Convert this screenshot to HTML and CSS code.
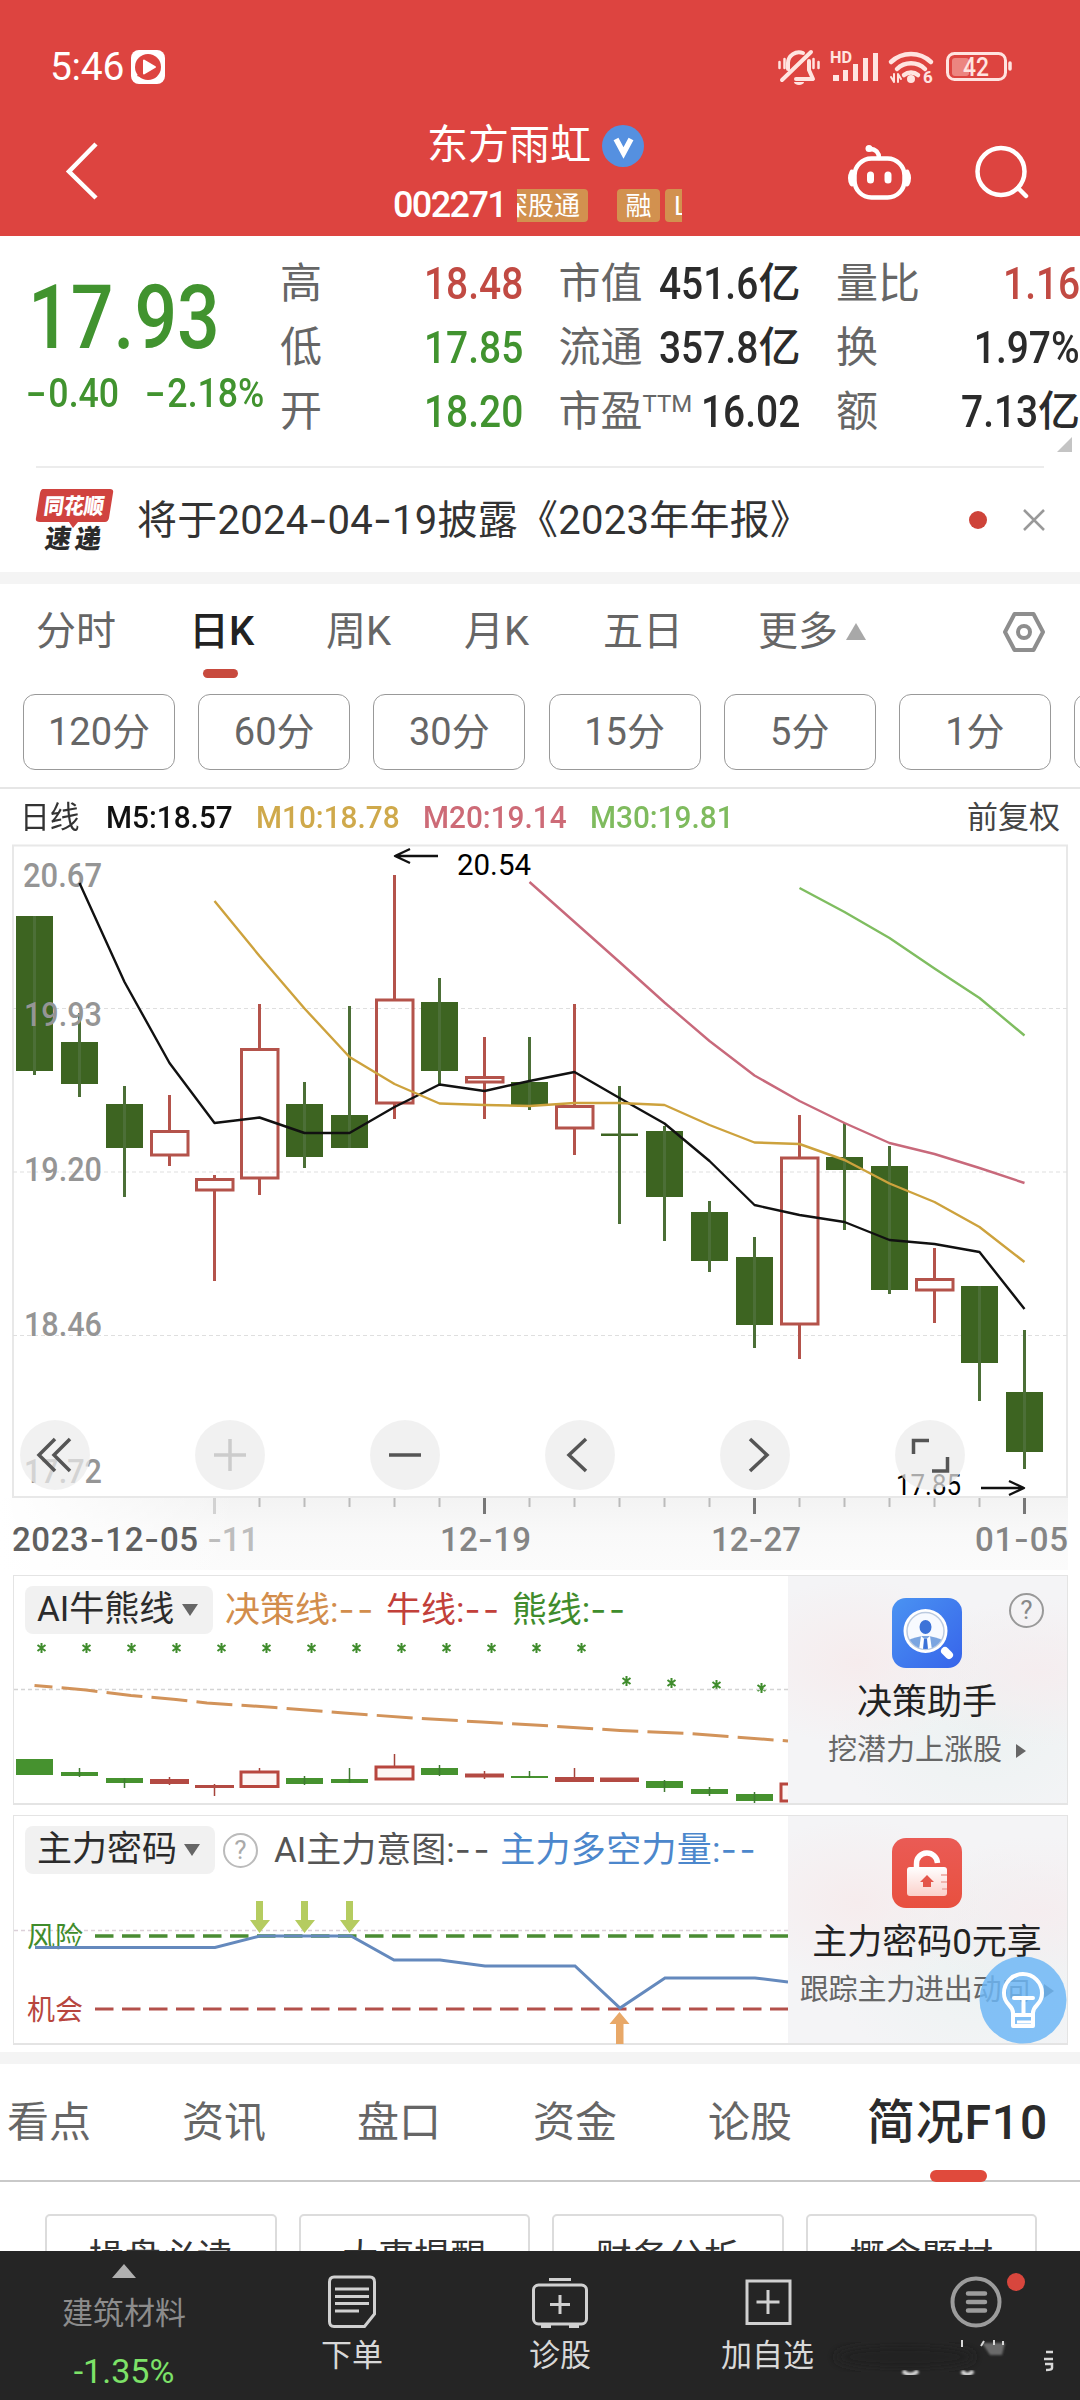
FILE: index.html
```html
<!DOCTYPE html>
<html lang="zh-CN">
<head>
<meta charset="utf-8">
<title>东方雨虹 002271</title>
<link rel="stylesheet" href="styles.css">
</head>
<body>
<header class="top">
  <div class="status">
    <div class="clock"><span>5:46</span>
      <svg width="34" height="34" viewBox="0 0 34 34"><rect width="34" height="34" rx="8" fill="#fff"/><circle cx="17" cy="17" r="13" fill="#dd4440"/><path d="M6 26 9 21 13 28Z" fill="#dd4440"/><path d="M13 10.5v13L24 17Z" fill="#fff" stroke="#fff" stroke-width="2" stroke-linejoin="round"/></svg>
    </div>
    <svg class="sysicons" width="240" height="40" viewBox="775 47 240 40" fill="none" stroke="#ffe4e0" stroke-width="4" stroke-linecap="round" stroke-linejoin="round">
      <path d="M788 69v-6a11 11 0 0 1 15-10M809 61v9l4 9h-17M782 80l29-28"/><path d="M794 82a5 3 0 0 0 10 0Z" fill="#ffe4e0" stroke="none"/>
      <path d="M779.500 62v6M784.500 59v9M813.500 59v9M818.500 62v6" stroke-width="2.500"/>
      <text x="830" y="63" class="svg-sm" textLength="22" lengthAdjust="spacingAndGlyphs">HD</text>
      <path d="M833 75h6v6h-6zM843 70h5v11h-5zM853 64h5v17h-5zM863 58h5v23h-5zM873 53h5v28h-5z" fill="#ffe4e0" stroke="none"/>
      <path d="M891 62a29 29 0 0 1 40 0M897 69a20 20 0 0 1 28 0M904 75a11 11 0 0 1 14 0" stroke-width="4.500"/>
      <circle cx="911" cy="79" r="4" fill="#ffe4e0" stroke="none"/><path d="M891 77l3 5v-8M898 82v-8l3 5" stroke-width="2"/>
      <text x="923" y="83" class="svg-6">6</text>
      <rect x="947.500" y="53.500" width="58" height="26" rx="7" stroke-width="3"/><rect x="952" y="58" width="17" height="18" rx="3" fill="#ec8580" stroke="none"/>
      <path d="M1010 63v6" stroke-width="3.500"/><text x="963" y="75.500" class="svg-42" textLength="26" lengthAdjust="spacingAndGlyphs">42</text>
    </svg>
  </div>
  <nav class="nav">
    <svg class="back" width="36" height="60" viewBox="64 141 36 60"><path d="M96 144 69 171.500 96 198" fill="none" stroke="#fff" stroke-width="4.500"/></svg>
    <div class="title">
      <div class="name">东方雨虹<svg width="42" height="42" viewBox="0 0 42 42"><circle cx="21" cy="21" r="21" fill="#5590e0"/><path d="m14 14 7.500 14 7.500-14" fill="none" stroke="#fff" stroke-width="5.500"/></svg></div>
      <div class="code"><span class="num">002271</span><span class="tag cut">深股通</span><span class="tag rong">融</span><span class="tag ell">L</span></div>
    </div>
    <svg class="navicons" width="190" height="64" viewBox="845 141 190 64" fill="none" stroke="#fff" stroke-width="4.500" stroke-linecap="round">
      <rect x="854.500" y="158.500" width="50" height="39" rx="17"/><circle cx="869" cy="148.500" r="3.500" fill="#fff" stroke="none"/><path d="M870 149c6 0 9 4 9 9"/><path d="M852 172q-3 6 0 12M907 172q3 6 0 12" stroke-width="5"/><path d="M870.500 175v5M888 175v5" stroke-width="7"/>
      <circle cx="1001" cy="171.500" r="23.500"/><path d="m1018 188 8 8"/>
    </svg>
  </nav>
</header>

<section class="quote">
  <div class="price">
    <div class="last"><span>17.93</span></div>
    <div class="chg"><span><i>-</i>0.40</span><span><i>-</i>2.18%</span></div>
  </div>
  <div class="stats">
    <div><label>高</label><b class="red"><s>18.48</s></b></div><div><label>市值</label><b><s>451.6</s>亿</b></div><div><label>量比</label><b class="red"><s>1.16</s></b></div>
    <div><label>低</label><b class="green"><s>17.85</s></b></div><div><label>流通</label><b><s>357.8</s>亿</b></div><div><label>换</label><b><s>1.97%</s></b></div>
    <div><label>开</label><b class="green"><s>18.20</s></b></div><div><label>市盈<sup>TTM</sup></label><b><s>16.02</s></b></div><div><label>额</label><b><s>7.13</s>亿</b></div>
  </div>
  <i class="corner"></i>
</section>

<section class="news">
  <svg width="80" height="66" viewBox="34 486 80 66">
    <path d="M43 488h67q4 0 3 4l-4 25q-1 4-4 4h-27l-5 6-4-6h-29q-5 0-4-4l4-25q1-4 3-4Z" fill="#d0433f"/>
    <text transform="translate(43 513) skewX(-8)" class="logo-a" textLength="60" lengthAdjust="spacingAndGlyphs">同花顺</text>
    <text transform="translate(44 547) skewX(-8)" class="logo-b" textLength="56">速递</text>
  </svg>
  <p>将于2024<i>-</i>04<i>-</i>19披露《2023年年报》</p>
  <em></em>
  <svg width="24" height="22" viewBox="0 0 24 22"><path d="m2 1 20 20M22 1 2 21" stroke="#999" stroke-width="2.500"/></svg>
</section>
<div class="gap"></div>

<section class="period">
  <div class="tabs"><span>分时</span><span class="on">日K</span><span>周K</span><span>月K</span><span>五日</span><span>更多<i></i></span>
    <svg width="44" height="42" viewBox="0 0 44 42" fill="none" stroke="#8e8e8e" stroke-width="4" stroke-linejoin="round"><path d="M12.500 3h19L41 21l-9.500 18h-19L3 21Z"/><circle cx="22" cy="21" r="6"/></svg>
  </div>
  <div class="pills"><span>120分</span><span>60分</span><span>30分</span><span>15分</span><span>5分</span><span>1分</span><span></span></div>
</section>

<section class="ma"><span class="k">日线</span><span class="m5">M5:18.57</span><span class="m10">M10:18.78</span><span class="m20">M20:19.14</span><span class="m30">M30:19.81</span><span class="fq">前复权</span></section>

<section class="chart">
<svg width="1080" height="734" viewBox="0 840 1080 734">
  <defs><linearGradient id="ax" x1="0" x2="0" y1="0" y2="1"><stop offset="0" stop-color="#f3f3f3"/><stop offset=".5" stop-color="#f9f9f9"/><stop offset="1" stop-color="#fbfbfb"/></linearGradient>
  <linearGradient id="fade" x1="0" x2="1" y1="0" y2="0"><stop offset="0" stop-color="#fff"/><stop offset="1" stop-color="#fff" stop-opacity="0"/></linearGradient></defs>
  <rect x="0" y="1498" width="1068" height="72" fill="url(#ax)"/><rect x="0" y="1498" width="240" height="72" fill="url(#fade)"/>
  <rect x="13" y="845.500" width="1054" height="651.500" fill="none" stroke="#e8e8e8" stroke-width="2"/>
  <path d="M13 1008.500H1067M13 1172H1067M13 1335.500H1067" stroke="#dfdfdf" stroke-width="1.200" stroke-dasharray="4 3"/>
  <g fill="#3d6421"><path d="M16 916h37v155h-37zM61 1042h37v42h-37zM106 1104h37v44h-37zM286 1104h37v53h-37zM331 1115h37v33h-37zM421 1002h37v69h-37zM511 1082h37v23h-37zM601 1133.500h37v2.500h-37zM646 1131h37v66h-37zM691 1212h37v49h-37zM736 1257h37v68h-37zM826 1157h37v13h-37zM871 1166h37v124h-37zM961 1286h37v77h-37zM1006 1392h37v60h-37z"/></g>
  <path d="M34.500 916V1075M79.500 1013V1097M124.500 1086V1197M304.500 1082V1168M349.500 1006V1148M439.500 978V1084M529.500 1037V1110M619.500 1086V1224M664.500 1126V1241M709.500 1201V1272M754.500 1237V1348M844.500 1123V1230M889.500 1146V1294M979.500 1286V1401M1024.500 1330V1469" stroke="#4c6f37" stroke-width="3"/>
  <g fill="none" stroke="#b4534b" stroke-width="3"><path d="M169.500 1095v36M169.500 1155v11M214.500 1175v4M214.500 1190v91M259.500 1004v45M259.500 1179v16M394.500 875v125M394.500 1104v15M484.500 1037v40M484.500 1082v37M574.500 1004v102M574.500 1128v27M799.500 1115v42M799.500 1325v34M934.500 1248v31M934.500 1290v33"/>
  <path d="M151.500 1131.500h36.500v23.500h-36.500zM196.500 1179.500h36.500v10.500h-36.500zM241.500 1049.500h36.500v128.500h-36.500zM376.500 1000h36.500v103h-36.500zM466.500 1077.500h36.500v4.500h-36.500zM556.500 1106.500h36.500v21.500h-36.500zM781.500 1158h36.500v166h-36.500zM916.500 1279.500h36.500v10.500h-36.500z"/></g>
  <g class="ylab"><text x="23" y="886.500" textLength="79" lengthAdjust="spacingAndGlyphs">20.67</text><text x="24" y="1025.500" textLength="78" lengthAdjust="spacingAndGlyphs">19.93</text><text x="24" y="1181" textLength="78" lengthAdjust="spacingAndGlyphs">19.20</text><text x="24" y="1335.500" textLength="78" lengthAdjust="spacingAndGlyphs">18.46</text><text x="24" y="1482.500" textLength="78" lengthAdjust="spacingAndGlyphs">17.72</text></g>
  <g fill="none" stroke-width="2.400" stroke-linejoin="round">
    <path stroke="#111" d="M79.500 883 124.500 982 169.500 1063 214.500 1123 259.500 1117.500 304.500 1133 349.500 1133 394.500 1107 439.500 1084.500 484.500 1091 529.500 1081 574.500 1072 619.500 1098 664.500 1123.500 709.500 1161 754.500 1205 799.500 1215 844.500 1222 889.500 1240 934.500 1244 979.500 1252 1024.500 1309"/>
    <path stroke="#cda23d" d="M214.500 901 259.500 956 304.500 1008.500 349.500 1057 394.500 1084 439.500 1103.500 484.500 1105 529.500 1106 574.500 1103 619.500 1103 664.500 1105 709.500 1125 754.500 1142.500 799.500 1144 844.500 1160 889.500 1183.500 934.500 1202 979.500 1227 1024.500 1262"/>
    <path stroke="#c8697b" d="M529.500 882 574.500 922 619.500 962 664.500 1002.500 709.500 1041 754.500 1075.500 799.500 1101 844.500 1123 889.500 1143 934.500 1154 979.500 1168 1024.500 1183"/>
    <path stroke="#7fbd60" d="M799.500 888 844.500 912 889.500 938 934.500 968.500 979.500 998 1024.500 1035.500"/>
    <path stroke="#111" d="M438 856H395M410 849l-15 7 15 7M981 1488h43M1009 1481l15 7-15 7"/>
  </g>
  <text class="mark" x="457" y="875" textLength="74" lengthAdjust="spacingAndGlyphs">20.54</text><text class="mark" x="896" y="1494.500" textLength="65" lengthAdjust="spacingAndGlyphs">17.85</text>
  <path d="M259.500 1498v9M304.500 1498v9M349.500 1498v9M394.500 1498v9M439.500 1498v9M529.500 1498v9M574.500 1498v9M619.500 1498v9M664.500 1498v9M709.500 1498v9M799.500 1498v9M844.500 1498v9M889.500 1498v9M934.500 1498v9M979.500 1498v9" stroke="#bbb" stroke-width="2"/>
  <path d="M214.500 1498v16" stroke="#d2d2d2" stroke-width="3"/><path d="M484.500 1498v16M754.500 1498v16M1024.500 1498v16" stroke="#777" stroke-width="3"/>
  <g class="xlab"><text x="12" y="1551" textLength="186" fill="#606060">2023<tspan>-</tspan>12<tspan>-</tspan>05</text><text x="207" y="1551" textLength="52" fill="#bdbdbd"><tspan>-</tspan>11</text><text x="440" y="1551" textLength="91">12<tspan>-</tspan>19</text><text x="711" y="1551" textLength="90">12<tspan>-</tspan>27</text><text x="975" y="1551" textLength="93">01<tspan>-</tspan>05</text></g>
</svg>
<div class="tools">
  <span><svg viewBox="0 0 70 70"><path d="M35 19 19 35l16 16M50 19 34 35l16 16"/></svg></span>
  <span class="off"><svg viewBox="0 0 70 70"><path d="M19 35h32M35 19v32"/></svg></span>
  <span><svg viewBox="0 0 70 70"><path d="M19 35h32"/></svg></span>
  <span><svg viewBox="0 0 70 70"><path d="M41 19 24 35l17 16"/></svg></span>
  <span><svg viewBox="0 0 70 70"><path d="m30 19 17 16-17 16"/></svg></span>
  <span><svg viewBox="0 0 70 70"><path d="M18.500 34V20.500H34M37 51h15.500V37"/></svg></span>
</div>
</section>

<section class="panel">
  <div class="main">
    <div class="head"><span class="chip">AI牛熊线<i></i></span><span class="or">决策线:<i>--</i></span><span class="rd">牛线:<i>--</i></span><span class="gn">熊线:<i>--</i></span></div>
    <svg width="774" height="164" viewBox="14 1640 774 164">
      <defs><path id="st" d="M0-5V5M-4-3 4 3M-4 3 4-3" stroke="#3f8c2c" stroke-width="2"/></defs>
      <use href="#st" x="41.500" y="1648"/><use href="#st" x="86.500" y="1648"/><use href="#st" x="131.500" y="1648"/><use href="#st" x="176.500" y="1648"/><use href="#st" x="221.500" y="1648"/><use href="#st" x="266.500" y="1648"/><use href="#st" x="311.500" y="1648"/><use href="#st" x="356.500" y="1648"/><use href="#st" x="401.500" y="1648"/><use href="#st" x="446.500" y="1648"/><use href="#st" x="491.500" y="1648"/><use href="#st" x="536.500" y="1648"/><use href="#st" x="581.500" y="1648"/><use href="#st" x="626.500" y="1681"/><use href="#st" x="671.500" y="1683"/><use href="#st" x="716.500" y="1685"/><use href="#st" x="761.500" y="1688"/>
      <path d="M14 1689.500H788" stroke="#d4d4d4" stroke-width="1.500" stroke-dasharray="4 3"/>
      <path d="M34.500 1685.500 86 1690 131 1695.500 176 1699.500 207 1703 275 1707.500 344 1713 413 1718 482 1722 551 1726 620 1730.500 689 1733.500 788 1741" fill="none" stroke="#d2935a" stroke-width="3" stroke-dasharray="36 9.200" stroke-dashoffset="18"/>
      <path fill="#46922f" d="M16 1759h37v16h-37zM61 1772h37v4h-37zM106 1778h37v5h-37zM286 1778h37v6h-37zM331 1779h37v4h-37zM421 1768h37v7h-37zM511 1776h37v2h-37zM646 1781h37v7h-37zM691 1789h37v5h-37zM736 1794h37v7h-37z"/>
      <path stroke="#3f7a31" stroke-width="1.500" d="M79.500 1768v9M124.500 1778v10M304.500 1776v9M349.500 1768v15M439.500 1765v11M529.500 1771v7M664.500 1780v12M709.500 1787v9M754.500 1792v11"/>
      <path stroke="#a5433b" stroke-width="1.500" d="M169.500 1777v8M214.500 1784v12M259.500 1768v3M394.500 1754v12M484.500 1771v8M574.500 1768v14"/>
      <path fill="#b34a43" d="M150 1779h39v5h-39zM195 1785h39v3h-39zM465 1773.500h39v4h-39zM555 1777h39v5h-39zM600 1777.500h39v4.500h-39z"/>
      <path fill="#fdf6f5" stroke="#b8463e" stroke-width="3" d="M241 1772h37v14.500h-37zM376 1767h37v12h-37zM781 1784h37v17h-37z"/>
    </svg>
  </div>
  <aside>
    <svg class="ic" width="70" height="70" viewBox="0 0 70 70"><defs><linearGradient id="bl" x1="0" y1="0" x2="1" y2="1"><stop offset="0" stop-color="#4a93f2"/><stop offset="1" stop-color="#3764ea"/></linearGradient><clipPath id="lens"><circle cx="33.500" cy="33" r="18"/></clipPath></defs><rect width="70" height="70" rx="14" fill="url(#bl)"/><circle cx="33.500" cy="33" r="22" fill="#fff"/><circle cx="33.500" cy="33" r="18.500" fill="#f7faff" stroke="#bccbe0" stroke-width="1.500"/><g clip-path="url(#lens)"><path d="M14 52V44q2-3 16-6h7q14 3 16 6v8Z" fill="#7ba5e0"/><path d="m29 38 4.500 4 4.500-4 2 14H27Z" fill="#fff"/><path d="m32 41-1 10h5l-1-10Z" fill="#3d73d8"/></g><ellipse cx="33.500" cy="29" rx="6" ry="7" fill="#3d73d8"/><path d="m53 53 4 4" stroke="#fff" stroke-width="8" stroke-linecap="round"/></svg>
    <span class="q side">?</span>
    <h3>决策助手</h3><p>挖潜力上涨股<i></i></p>
  </aside>
</section>

<section class="panel">
  <div class="main">
    <div class="head two"><span class="chip">主力密码<i></i></span><span class="q">?</span><span class="gy">AI主力意图:<i>--</i></span><span class="bu">主力多空力量:<i>--</i></span></div>
    <svg width="774" height="164" viewBox="14 1880 774 164">
      <path d="M14 1930.500H788" stroke="#dbd0d8" stroke-width="1.500" stroke-dasharray="4 3"/>
      <text x="27" y="1947" class="risk" fill="#3f8c2c">风险</text><text x="27" y="2020" class="risk" fill="#b8463e">机会</text>
      <path d="M95 1936H788" stroke="#4a8c33" stroke-width="3.500" stroke-dasharray="18.500 8.500"/>
      <path d="M95 2009H788" stroke="#b3504a" stroke-width="3" stroke-dasharray="18.500 8.500"/>
      <path d="M35 1947.500H215L260 1936H351L394 1960H440L485 1966H575L620 2008 665 1978H755L788 1982" fill="none" stroke="#6489bd" stroke-width="3"/>
      <path fill="#b5cc60" d="M256 1901h7v19h7l-10.500 13-9.500-13h6zM301 1901h7v19h7l-10.500 13-9.500-13h6zM346 1901h7v19h7l-10.500 13-9.500-13h6z"/>
      <path fill="#e8a868" d="M616 2044v-20h-6.500l10-12 10 12h-6v20z"/>
    </svg>
  </div>
  <aside>
    <svg class="ic" width="70" height="70" viewBox="0 0 70 70"><defs><linearGradient id="rl" x1="0" y1="0" x2="0" y2="1"><stop offset="0" stop-color="#ea5b55"/><stop offset="1" stop-color="#e8503f"/></linearGradient><linearGradient id="lk" x1="0" y1="0" x2="0" y2="1"><stop offset="0" stop-color="#fff"/><stop offset="1" stop-color="#fbd0ca"/></linearGradient></defs><rect width="70" height="70" rx="14" fill="url(#rl)"/><path d="M24.500 30v-4a10.500 10.500 0 0 1 21-1" fill="none" stroke="#fff" stroke-width="5.500"/><rect x="15" y="29" width="40" height="29" rx="3" fill="url(#lk)"/><path d="M49 37h6M49 44h6M50 51h5" stroke="#f0b5ae" stroke-width="2"/><path d="m35 37 7 7h-3v5h-8v-5h-3Z" fill="#e4564b"/></svg>
    <h3>主力密码0元享</h3><p class="long">跟踪主力进出动向<i></i></p>
  </aside>
  <svg class="bulb" width="88" height="88" viewBox="0 0 88 88"><circle cx="44" cy="44" r="43.500" fill="#6cb6f5" fill-opacity=".84"/><g fill="none" stroke="#fff" stroke-width="4" stroke-linejoin="round" stroke-linecap="round"><path d="M34 70V57q0-4-4-8c-4-4-5-8-5-12a19 19 0 0 1 38 0c0 4-1 8-5 12q-4 4-4 8v13Z"/><path d="M35 42h19M44.500 42v17M36 59h16"/></g><path d="M38 66h14" stroke="#fff" stroke-width="3"/></svg>
</section>
<div class="gap low"></div>

<nav class="sections"><span>看点</span><span>资讯</span><span>盘口</span><span>资金</span><span>论股</span><span class="on">简况F10</span></nav>
<section class="cards"><span>操盘必读</span><span>大事提醒</span><span>财务分析</span><span>概念题材</span></section>

<footer>
  <div class="idx"><i></i><span>建筑材料</span><b>-1.35%</b></div>
  <div><svg width="60" height="60" viewBox="322 2270 60 60"><path d="M334 2277h36q4.500 0 4.500 5v32l-10 12.500H334q-4.500 0-4.500-5v-39.500q0-5 4.500-5ZM335 2289h34M335 2296.500h34M335 2303.500h34M335 2311h24"/></svg><span>下单</span></div>
  <div><svg width="60" height="60" viewBox="530 2270 60 60"><path d="M549 2279.500h22"/><rect x="533.500" y="2285" width="53" height="39" rx="5"/><path d="M541 2326.500h10M569 2326.500h10M550 2304.500h20M560 2295v19"/></svg><span>诊股</span></div>
  <div><svg width="60" height="60" viewBox="737.500 2270 60 60"><path d="M746.500 2281h43v42.500h-43ZM756 2302h23M767.500 2290v24"/></svg><span>加自选</span></div>
  <div class="more"><svg width="60" height="60" viewBox="946 2270 60 60"><circle cx="976" cy="2302" r="23.500" fill="none" stroke="#9c9c9c" stroke-width="4"/><path d="M968 2293.500h17M968 2302h17M968 2310.500h17" stroke="#9c9c9c" stroke-width="4.500" stroke-linecap="round"/></svg>
    <em></em>
    <svg class="worn" width="240" height="44" viewBox="826 2336 240 44"><defs><filter id="sb"><feGaussianBlur stdDeviation="1"/></filter><filter id="mb"><feGaussianBlur stdDeviation="5"/></filter></defs><ellipse cx="905" cy="2357" rx="70" ry="12" fill="#202020" filter="url(#mb)"/><path d="M982 2343l8 12h12l3-12Z" fill="#6a6a6a" filter="url(#sb)"/><g fill="none" stroke="#d8d8d8" stroke-width="2.500"><path d="M962 2340v7M984 2341l-3 5M994 2340v5M1003 2341v4" stroke-width="2"/><path d="M903 2371q7 7 15 0M962 2371q5 7 11 0" stroke-width="4" filter="url(#sb)"/><path d="M1046 2352h7M1044 2359h9M1045 2364h7v4q0 2-6 2"/></g></svg>
  </div>
</footer>
</body>
</html>
```
FILE: styles.css
```css
* { box-sizing: border-box; }
body {
  margin: 0; width: 1080px; height: 2400px; overflow: hidden; position: relative;
  display: flex; flex-direction: column; background: #fff; color: #333;
  font-family: Roboto, "Noto Sans CJK SC", sans-serif; line-height: 1; white-space: nowrap;
}
body > * { flex: none; }
svg { display: block; flex: none; }
i, em, s { font-style: normal; text-decoration: none; }
h3, p { margin: 0; font-weight: 400; }

/* header */
.top { height: 236px; background: #dd4440; color: #fff; }
.status { height: 100px; padding: 47px 65px 0 50px; display: flex; justify-content: space-between; }
.clock { display: flex; align-items: center; gap: 7px; height: 40px; font-size: 39px; letter-spacing: -.3px; }
.svg-sm, .svg-6, .svg-42 { fill: #ffe4e0; stroke: none; font-weight: 700; font-size: 16px; }
.svg-6 { font-size: 17px; }
.svg-42 { font-size: 25px; font-weight: 500; }
.nav { height: 136px; display: flex; justify-content: space-between; padding: 24px 45px 0 64px; }
.back, .navicons { margin-top: 17px; }
.title { width: 296px; margin-left: 137px; }
.name { display: flex; align-items: center; gap: 11px; height: 43px; font-size: 41px; padding-left: 34px; }
.code { display: flex; align-items: center; height: 34px; margin-top: 21px; }
.num { font-size: 36px; font-weight: 500; letter-spacing: -1.6px; width: 124px; }
.tag { height: 33px; background: #d2914f; font-size: 26px; line-height: 34px; border-radius: 4px; overflow: hidden; display: flex; justify-content: center; }
.tag.cut { width: 71px; border-radius: 0 4px 4px 0; justify-content: flex-end; padding-right: 8px; }
.tag.rong { width: 43px; margin: 0 5px 0 29px; }
.tag.ell { width: 17px; border-radius: 4px 0 0 4px; justify-content: flex-start; padding-left: 9px; }

/* quote */
.quote { height: 232px; display: flex; position: relative; }
.quote::after { content: ""; position: absolute; left: 36px; right: 36px; bottom: 0; height: 2px; background: #ececec; }
.price { width: 281px; color: #41932f; font-weight: 500; flex: none; }
.last { font-size: 89px; padding: 37px 0 0 28px; height: 124px; }
.last span { display: inline-block; transform: scaleX(.845); transform-origin: left; }
.chg { font-size: 41px; padding: 12px 0 0 24px; display: flex; }
.chg span { display: inline-block; transform: scaleX(.87); transform-origin: left; width: 119px; }
.chg i { display: inline-block; transform: scaleX(1.35); width: 28px; text-align: center; }
.chg i, .news p i, .head i { font-family: Inter, sans-serif; }
.stats { width: 799px; height: 192px; margin-top: 16px; display: grid; grid-template-columns: 242px 241px 243px; column-gap: 36.5px; grid-auto-rows: 64px; align-items: center; }
.stats div { display: flex; justify-content: space-between; align-items: center; }
.stats label { font-size: 42px; color: #666; margin-left: -1px; }
.stats sup { font-size: 24px; line-height: 0; vertical-align: 14px; }
.stats b { font-weight: 500; font-size: 42px; color: #2b2b2b; display: flex; align-items: center; justify-content: flex-end; }
.stats s { display: inline-block; font-size: 44px; transform: scaleX(.885); transform-origin: right; margin-left: -14px; }
.stats .red { color: #c14a43; }
.stats .green { color: #41932f; }
.corner { position: absolute; right: 8px; top: 201px; border-left: 15px solid transparent; border-bottom: 15px solid #c4c4c4; }

/* news */
.news { height: 104px; display: flex; align-items: center; padding-left: 34px; }
.news p { font-size: 40px; width: 832px; margin-left: 23px; letter-spacing: .25px; }
.news p i { font-size: 41px; }
.news em { width: 18px; height: 18px; border-radius: 50%; background: #ce4339; margin-right: 35px; }
.logo-a, .logo-b { font: 900 22px "Noto Sans CJK SC", sans-serif; fill: #fff; }
.logo-b { fill: #2b2b2b; font-size: 26px; }
.gap { height: 12px; background: #f4f4f4; }

/* period tabs */
.period { height: 205px; border-bottom: 2px solid #e6e6e6; overflow: hidden; }
.tabs { display: grid; grid-template-columns: 153px 137px 138px 139px 155px 244px 44px; padding: 1px 0 0 36px; height: 94px; align-items: center; font-size: 40px; color: #666; }
.tabs span, .tabs svg { position: relative; }
.tabs .on { color: #222; font-weight: 500; }
.tabs .on::after { content: ""; position: absolute; left: 14px; top: 57px; width: 35px; height: 9px; border-radius: 5px; background: #c84a3e; }
.tabs i { display: inline-block; margin: 0 0 5px 8px; border: 10.5px solid transparent; border-top: 0; border-bottom: 17px solid #a8a8a8; }
.pills { display: flex; gap: 23.2px; padding: 16px 0 0 23px; }
.pills span { flex: none; width: 152px; height: 76px; border: 1.5px solid #999; border-radius: 12px; font-size: 38px; line-height: 74px; text-align: center; color: #666; }

/* averages */
.ma { height: 51px; display: flex; align-items: center; padding: 5px 20px 0 20px; font-size: 31px; font-weight: 500; }
.ma span { flex: none; transform: scaleX(.96); transform-origin: left; }
.ma .k { width: 86px; font-weight: 400; }
.m5 { width: 150px; color: #111; }
.m10 { width: 167px; color: #cfa94b; }
.m20 { width: 167px; color: #cd6b77; }
.m30 { width: 160px; color: #7fbb5e; }
.ma .fq { margin-left: auto; font-weight: 400; color: #444; transform: none; }

/* candlestick chart */
.chart { position: relative; height: 735px; }
.ylab text { font-size: 33px; font-weight: 500; fill: #959595; }
.mark { font-size: 29px; fill: #000; }
.xlab text { font-size: 33px; font-weight: 500; }
.xlab text:not([fill]) { fill: #858585; }
.xlab tspan { font-family: Inter, sans-serif; }
.tools { position: absolute; left: 20px; top: 580px; display: flex; gap: 105px; }
.tools span { width: 70px; height: 70px; border-radius: 50%; background: rgba(236, 236, 236, .72); }
.tools path { fill: none; stroke: #555; stroke-width: 3.5; }
.tools .off path { stroke: #ccc; }

/* indicator panels */
.panel { position: relative; height: 230px; margin: 0 12px 10px 13px; border: 1px solid #e4e4e4; border-bottom-width: 2px; display: flex; }
.main { width: 774px; flex: none; }
.head { height: 64px; display: flex; align-items: center; padding: 4px 0 0 11px; font-size: 35px; gap: 10px; }
.head > span { flex: none; }
.head span > i { letter-spacing: 2.6px; }
.chip { width: 188px; height: 48px; border-radius: 8px; background: #f1f1f1; color: #2b2b2b; padding-left: 12px; line-height: 48px; display: flex; align-items: center; justify-content: space-between; padding-right: 15px; margin-right: 2px; }
.chip i { border: 8px solid transparent; border-bottom: 0; border-top: 12px solid #666; }
.head.two { gap: 8px; }
.two .chip { width: 190px; margin-right: 0; }
.or { color: #d28d4c; } .rd { color: #c2403a; } .gn { color: #3f8c2c; } .gy { color: #555; margin-left: 8px; } .bu { color: #4c87cc; letter-spacing: .3px; }
.q { width: 35px; height: 35px; border: 2.5px solid #bbb; border-radius: 50%; color: #aaa; font-size: 26px; line-height: 30px; text-align: center; }
.q.side { position: absolute; right: 23px; top: 17px; border-color: #999; color: #888; }
.risk { font-size: 28px; }
aside { position: relative; width: 279px; background: radial-gradient(ellipse at 25% 38%, #f6eced 0, rgba(246, 236, 237, 0) 42%), radial-gradient(ellipse at 90% 42%, #f5edef 0, rgba(245, 237, 239, 0) 40%), radial-gradient(ellipse at 70% 66%, #ecf2f2 0, rgba(236, 242, 242, 0) 55%), #f4f4f6; display: flex; flex-direction: column; align-items: center; padding: 22px 1px 0 0; }
aside h3 { font-size: 35px; color: #222; margin-top: 17px; }
aside p { font-size: 29px; color: #666; display: flex; align-items: center; margin-top: 16px; }
aside p i { border: 7.5px solid transparent; border-right: 0; border-left: 10px solid #666; margin-left: 14px; }
.long { letter-spacing: -.2px; }
.bulb { position: absolute; right: 0; top: 140px; }

/* lower tabs */
.gap.low { margin-top: -3px; }
.sections { height: 118px; border-bottom: 2px solid #c9c9c9; display: grid; grid-template-columns: 175px 175px 176px 175px 159px 1fr; padding-left: 7px; line-height: 118px; font-size: 42px; color: #666; }
.sections .on { position: relative; font-size: 48px; font-weight: 500; color: #2b2b2b; letter-spacing: .8px; }
.sections .on::after { content: ""; position: absolute; left: 63px; bottom: 0; width: 57px; height: 12px; border-radius: 6px; background: #e04a3c; }
.cards { height: 69px; padding: 32px 0 0 45px; display: flex; gap: 22px; overflow: hidden; }
.cards span { flex: none; width: 231.500px; height: 90px; border: 2px solid #dcdcdc; border-radius: 5px; text-align: center; font-size: 36px; line-height: 84px; color: #333; }

/* bottom bar */
footer { height: 149px; background: #252525; display: grid; grid-template-columns: 248px 208px 208px 207px 209px; color: #d8d8d8; font-size: 31px; }
footer div { display: flex; flex-direction: column; align-items: center; padding-top: 19px; position: relative; }
footer svg { fill: none; stroke: #d0d0d0; stroke-width: 3; }
footer span { margin-top: 10px; }
footer .idx { padding-top: 13px; }
.idx i { border: 12.5px solid transparent; border-top: 0; border-bottom: 14px solid #b0b0b0; }
.idx span { margin-top: 20px; color: #8c8c8c; }
.idx b { font-size: 34px; font-weight: 400; color: #7de268; margin-top: 25px; }
.more em { position: absolute; left: 136px; top: 22px; width: 18px; height: 18px; border-radius: 50%; background: #d8463d; }
.more .worn { position: absolute; left: -45px; top: 85px; stroke: none; }
```
